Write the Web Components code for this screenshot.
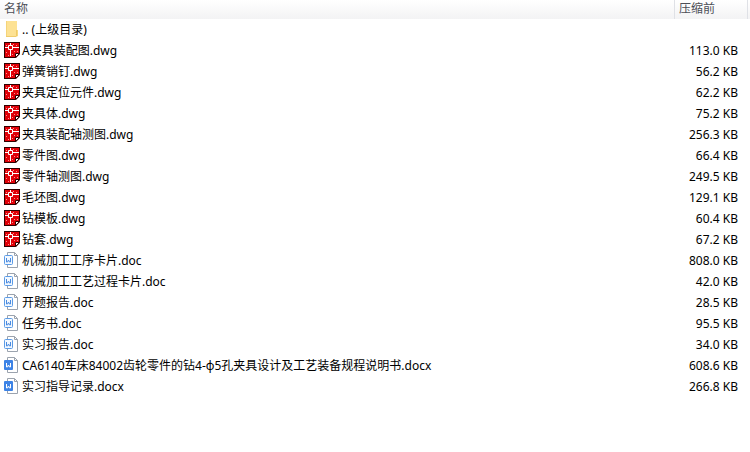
<!DOCTYPE html>
<html lang="zh-CN">
<head>
<meta charset="utf-8">
<title>文件列表</title>
<style>
	body {
		margin: 0;
		background: #fff;
		color: #000;
		font-family: "Noto Sans", "Noto Sans CJK SC", sans-serif;
		font-size: 12px;
	}
</style>
</head>
<body>
<archive-list></archive-list>

<script>
	// Drawings for each kind of entry, all on a 16 x 16 grid
	const ICONS = {
		folder: `
			<path d="M2 0h11v15H2z" fill="#fde294"/>
			<path d="M2 0h1v15H2z" fill="#f5d47a"/>
			<path d="M2 15h10v1H2z" fill="#f0cc6c"/>
			<path d="M12 9h2v6l-2 1z" fill="#f7d980"/>
			<path d="M12 9h1v6h-1z" fill="#efca68"/>`,
		dwg: `
			<path d="M0 0h16v12l-4 4H0z" fill="#300000"/>
			<path d="M1 1h14v10l-4 4H1z" fill="#e00008"/>
			<path d="M2 10h1v1H2zM4 13h1v1H4zM8 12h1v1H8zM12 3h1v1h-1zM2 3h1v1H2zM10 9h1v1h-1zM13 9h1v1h-1zM9 2h1v1H9z" fill="#ff8c8c"/>
			<path d="M1 5.500h3M8 5.500h7M6.500 1v2M6.500 8v6" stroke="#fff" fill="none"/>
			<path d="M4.500 3.500h4v4h-4z" stroke="#fff" fill="none"/>
			<path d="M11.500 15.500v-4h4z" fill="#fff" stroke="#300000"/>`,
		doc: `
			<path d="M3.500 .5h7l3 3v12h-10z" fill="#fff" stroke="#9ba3ae"/>
			<path d="M10.500 .5v3h3" fill="none" stroke="#9ba3ae"/>
			<rect x=".5" y="3.500" width="8" height="9" rx="1" fill="#f2f8ff" stroke="#5c9be6"/>
			<path d="M2.500 6v4h1l1-2 1 2h1V6" fill="none" stroke="#4a8be0"/>`,
		docx: `
			<path d="M3.500 .5h7l3 3v12h-10z" fill="#fff" stroke="#9ba3ae"/>
			<path d="M10.500 .5v3h3" fill="none" stroke="#9ba3ae"/>
			<rect x="0" y="3" width="9" height="10" rx="1" fill="#3d83e6"/>
			<path d="M2.500 6v4h1l1-2 1 2h1V6" fill="none" stroke="#fff"/>`
	};

	const FILES = [
		['folder', '.. (上级目录)', ''],
		['dwg', 'A夹具装配图.dwg', '113.0 KB'],
		['dwg', '弹簧销钉.dwg', '56.2 KB'],
		['dwg', '夹具定位元件.dwg', '62.2 KB'],
		['dwg', '夹具体.dwg', '75.2 KB'],
		['dwg', '夹具装配轴测图.dwg', '256.3 KB'],
		['dwg', '零件图.dwg', '66.4 KB'],
		['dwg', '零件轴测图.dwg', '249.5 KB'],
		['dwg', '毛坯图.dwg', '129.1 KB'],
		['dwg', '钻模板.dwg', '60.4 KB'],
		['dwg', '钻套.dwg', '67.2 KB'],
		['doc', '机械加工工序卡片.doc', '808.0 KB'],
		['doc', '机械加工工艺过程卡片.doc', '42.0 KB'],
		['doc', '开题报告.doc', '28.5 KB'],
		['doc', '任务书.doc', '95.5 KB'],
		['doc', '实习报告.doc', '34.0 KB'],
		['docx', 'CA6140车床84002齿轮零件的钻4-φ5孔夹具设计及工艺装备规程说明书.docx', '608.6 KB'],
		['docx', '实习指导记录.docx', '266.8 KB']
	];

	/**
	 * Icon for one kind of entry, chosen by the "kind" attribute.
	 */
	class FileIcon extends HTMLElement {
		constructor() {
			super();
			this.attachShadow({ mode: 'open' });
		}

		connectedCallback() {
			this.shadowRoot.innerHTML = `
	<style>
	:host {
		display: block;
		flex: none;
		width: 16px;
		height: 16px;
	}

	svg {
		display: block;
	}
	</style>
	<svg width="16" height="16" viewBox="0 0 16 16" aria-hidden="true">${ICONS[this.getAttribute('kind')]}</svg>
			`;
		}
	}

	/**
	 * Icon followed by the slotted file name.
	 */
	class FileName extends HTMLElement {
		constructor() {
			super();
			this.attachShadow({ mode: 'open' });
		}

		connectedCallback() {
			this.shadowRoot.innerHTML = `
	<style>
	:host {
		display: flex;
		gap: 2px;
		white-space: nowrap;
	}

	file-icon {
		margin-top: 2px;
	}
	</style>
	<file-icon kind="${this.getAttribute('kind')}"></file-icon>
	<span><slot></slot></span>
			`;
		}
	}

	/**
	 * Table with the contents of the archive.
	 */
	class ArchiveList extends HTMLElement {
		constructor() {
			super();
			const shadow = this.attachShadow({ mode: 'open' });

			shadow.innerHTML = `
	<style>
	:host {
		display: block;
	}

	table {
		width: 100%;
		table-layout: fixed;
		border-collapse: separate;
		border-spacing: 0;
	}

	.size {
		width: 73px;
	}

	.more {
		width: 3px;
	}

	thead tr {
		background: linear-gradient(#fff, #f3f3f4);
	}

	th {
		box-sizing: border-box;
		height: 19px;
		padding: 0;
		text-align: left;
		vertical-align: top;
	}

	th + th {
		border-left: 1px solid #dfe1e6;
	}

	button {
		display: block;
		width: 100%;
		padding: 0 4px;
		border: 0;
		background: none;
		color: #4c4f57;
		font: inherit;
		font-weight: normal;
		line-height: 17px;
		text-align: left;
	}

	td {
		padding: 0 0 0 4px;
		line-height: 21px;
		vertical-align: top;
	}

	td + td {
		padding: 0 9px 0 0;
		text-align: right;
		white-space: nowrap;
	}
	</style>
	<table>
		<colgroup><col><col class="size"><col class="more"></colgroup>
		<thead>
			<tr>
				<th scope="col"><button type="button">名称</button></th>
				<th scope="col"><button type="button">压缩前</button></th>
				<th></th>
			</tr>
		</thead>
		<tbody></tbody>
	</table>
			`;

			// One row per file
			const body = shadow.querySelector('tbody');
			FILES.forEach(([kind, name, size]) => {
				const row = document.createElement('tr');
				row.innerHTML = `<td><file-name kind="${kind}">${name}</file-name></td><td>${size}</td>`;
				body.appendChild(row);
			});
		}
	}

	customElements.define('file-icon', FileIcon);
	customElements.define('file-name', FileName);
	customElements.define('archive-list', ArchiveList);
</script>
</body>
</html>
